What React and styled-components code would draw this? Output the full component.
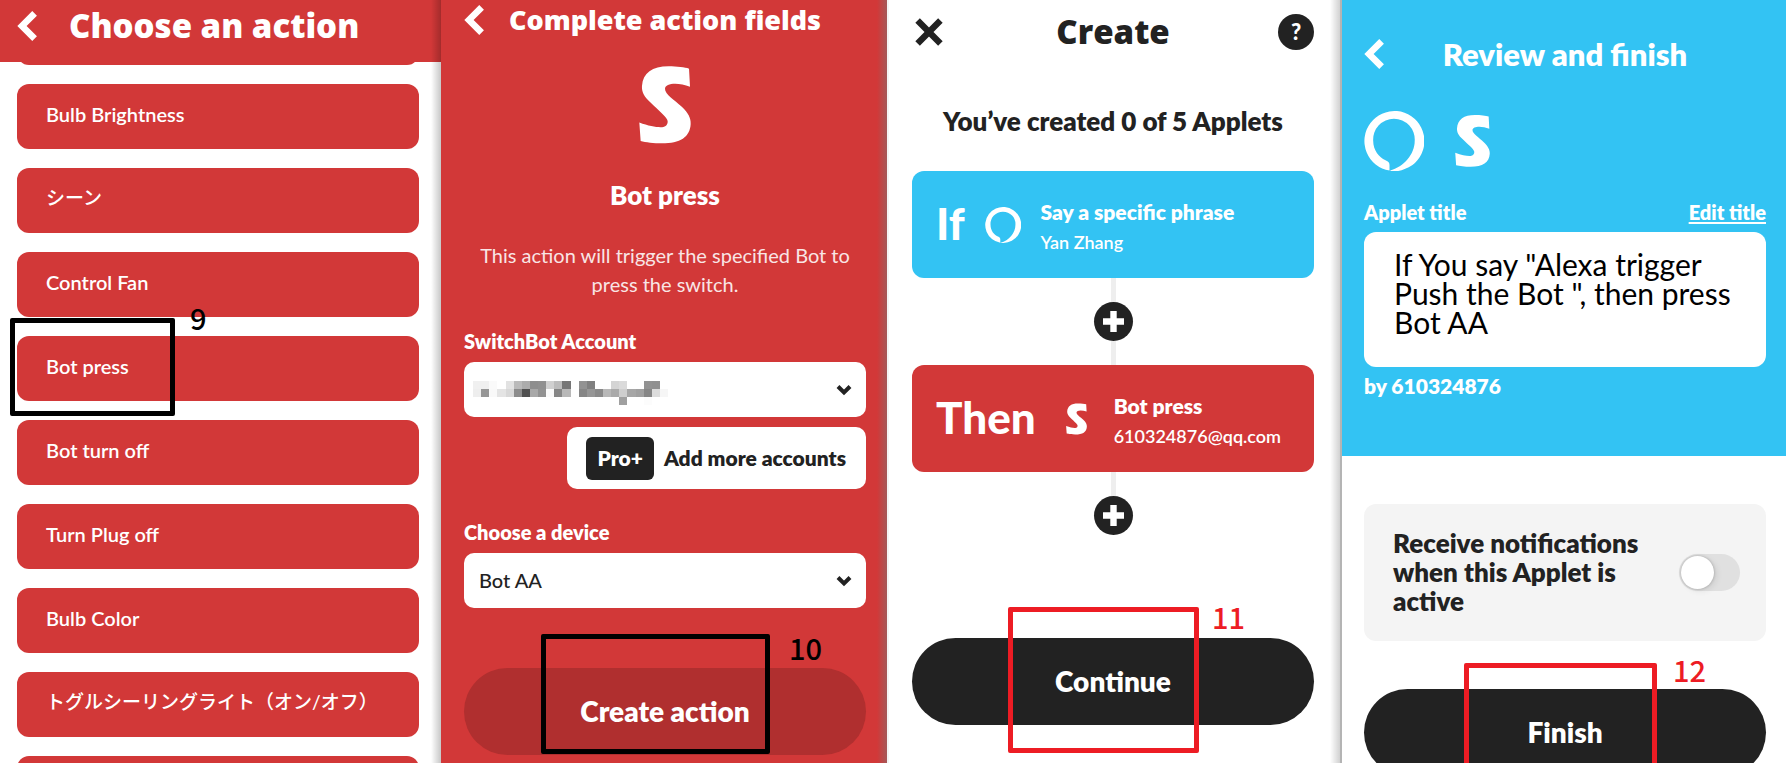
import React from "react";
import styled, { createGlobalStyle } from "styled-components";

const RED = "#d23838";
const BLUE = "#33c3f3";
const INK = "#222222";
const MARK_RED = "#ed1c24";

const GlobalStyle = createGlobalStyle`
  *, *::before, *::after { box-sizing: border-box; }
  body {
    margin: 0;
    background: #fff;
    font-family: Lato, "Noto Sans CJK JP", sans-serif;
    font-size: 20px;
    line-height: 24px;
    color: ${INK};
  }
  h1, h2, h3, p, ul { margin: 0; padding: 0; }
  button, select, textarea { font: inherit; color: inherit; border: 0; margin: 0; padding: 0; }
`;

const Board = styled.main`
  display: grid;
  grid-template-columns: 441fr 448fr 453fr 444fr;
  height: 100vh;
  overflow: hidden;
`;

const Screen = styled.section`
  position: relative;
  min-width: 0;
  overflow: hidden;
  background: ${(p) => p.$bg || "#fff"};
  color: ${(p) => p.$color || INK};
  padding: 0 ${(p) => p.$right || 0}px 0 ${(p) => p.$left || 0}px;
  border-right: ${(p) => p.$edge || "0"};

  &::after {
    content: "";
    display: ${(p) => (p.$shade ? "block" : "none")};
    position: absolute;
    z-index: 3;
    top: 0;
    right: 0;
    bottom: 0;
    width: 10px;
    background: linear-gradient(to right, transparent, ${(p) => p.$shade});
  }
`;

const IconButton = styled.button`
  display: flex;
  align-items: center;
  justify-content: center;
  flex: none;
  background: none;
  cursor: pointer;
`;

const Bar = styled.header`
  display: grid;
  grid-template-columns: 36px 1fr 36px;
  align-items: center;
  justify-items: center;
  height: ${(p) => p.$height}px;

  & > button:first-child { justify-self: start; }
`;

const StickyBar = styled.header`
  position: relative;
  z-index: 2;
  display: flex;
  align-items: center;
  gap: 32px;
  height: 62px;
  padding: 0 17px 10px;
  background: ${RED};
  color: #fff;
`;

const Title = styled.h1`
  font-family: ${(p) => (p.$weight ? "inherit" : '"Open Sans", sans-serif')};
  font-size: ${(p) => p.$size}px;
  line-height: 40px;
  font-weight: ${(p) => p.$weight || 800};
  text-align: center;
  white-space: nowrap;
`;

/* ---------- action list ---------- */

const ActionList = styled.ul`
  list-style: none;
  display: flex;
  flex-direction: column;
  gap: 19px;
  margin-top: -62px;
  padding: 0 22px 0 17px;
`;

const ActionItem = styled.li`
  position: relative;
`;

const ActionButton = styled.button`
  display: block;
  width: 100%;
  height: 65px;
  padding: 0 29px 6px;
  border-radius: 12px;
  background: ${RED};
  color: #fff;
  font-weight: 600;
  text-align: left;
  cursor: pointer;

  &:lang(ja) { font-size: 19px; font-weight: 500; }
`;

/* ---------- form parts ---------- */

const Logo = styled.div`
  display: flex;
  justify-content: center;
  margin-top: 26px;
`;

const Heading = styled.h2`
  font-size: 26px;
  line-height: 30px;
  font-weight: 800;
  text-align: center;
  white-space: nowrap;
  margin-top: ${(p) => p.$top}px;
`;

const Description = styled.p`
  margin-top: 31px;
  line-height: 29px;
  text-align: center;
  opacity: 0.87;
`;

const FieldLabel = styled.label`
  display: block;
  margin-top: ${(p) => p.$top || 0}px;
  font-weight: 800;
`;

const SelectBox = styled.div`
  position: relative;
  margin-top: 9px;
  color: ${INK};

  select {
    appearance: none;
    display: block;
    width: 100%;
    height: 55px;
    padding: 0 48px 2px 15px;
    border-radius: 10px;
    background: #fff;
    font-weight: 500;
  }
`;

const SelectArrow = styled.svg`
  position: absolute;
  right: 14px;
  top: 22px;
  pointer-events: none;
`;

const Mosaic = styled.svg`
  position: absolute;
  left: 9px;
  top: 19px;
  pointer-events: none;
`;

const AddAccounts = styled.button`
  display: flex;
  align-items: center;
  gap: 10px;
  height: 62px;
  margin: 10px 0 0 auto;
  padding: 0 20px 0 19px;
  border-radius: 10px;
  background: #fff;
  color: ${INK};
  font-size: 21px;
  font-weight: 800;
  cursor: pointer;
`;

const ProTag = styled.span`
  display: flex;
  align-items: center;
  height: 43px;
  padding: 0 11px;
  border-radius: 6px;
  background: ${INK};
  color: #fff;
`;

const Cta = styled.div`
  position: relative;
  margin-top: ${(p) => p.$top}px;
`;

const CtaButton = styled.button`
  display: block;
  width: 100%;
  height: 87px;
  padding-bottom: 2px;
  border-radius: 44px;
  background: ${(p) => p.$bg || INK};
  color: #fff;
  font-size: 28px;
  font-weight: 800;
  cursor: pointer;
`;

/* ---------- applet builder ---------- */

const HelpButton = styled(IconButton)`
  width: 36px;
  height: 36px;
  border-radius: 50%;
  background: ${INK};
  color: #fff;
  font-size: 22px;
  font-weight: 900;
`;

const StepCard = styled.article`
  display: flex;
  align-items: center;
  height: 107px;
  margin-top: ${(p) => p.$top || 0}px;
  padding: 0 24px;
  border-radius: 12px;
  background: ${(p) => p.$bg};
  color: #fff;
`;

const StepWord = styled.span`
  font-size: 44px;
  line-height: 48px;
  font-weight: 900;
  padding-bottom: 4px;
  margin-right: ${(p) => p.$gap}px;
`;

const StepText = styled.div`
  margin-left: ${(p) => p.$gap}px;
  padding-top: 4px;

  h3 {
    font-size: 21px;
    line-height: 30px;
    font-weight: 800;
    white-space: nowrap;
  }
  p {
    font-size: 18px;
    line-height: 30px;
    font-weight: 600;
  }
`;

const Connector = styled.div`
  display: flex;
  flex-direction: column;
  align-items: center;
`;

const Line = styled.span`
  width: 5px;
  height: 24px;
  background: #eeeeee;
`;

const AddStep = styled(IconButton)`
  width: 39px;
  height: 39px;
  border-radius: 50%;
  background: ${INK};
`;

/* ---------- review ---------- */

const ReviewTop = styled.div`
  padding: 22px 20px 58px 22px;
  background: ${BLUE};
  color: #fff;
`;

const ReviewBody = styled.div`
  padding: 48px 20px 0 22px;
`;

const ServiceIcons = styled.div`
  display: flex;
  align-items: center;
  gap: 31px;
  margin-top: 25px;
`;

const LabelRow = styled.div`
  display: flex;
  justify-content: space-between;
  margin-top: 29px;
  font-weight: 800;

  a { color: inherit; text-decoration-thickness: 2px; text-underline-offset: 2px; }
`;

const TitleInput = styled.textarea`
  display: block;
  width: 100%;
  height: 135px;
  margin-top: 8px;
  padding: 18px 28px 0 30px;
  border-radius: 12px;
  background: #fff;
  color: #000;
  font-size: 30px;
  line-height: 29px;
  resize: none;
  outline: 0;
  overflow: hidden;
`;

const Byline = styled.p`
  margin-top: 7px;
  font-size: 21px;
  font-weight: 800;
`;

const NotifyCard = styled.label`
  display: flex;
  align-items: center;
  justify-content: space-between;
  height: 137px;
  padding: 0 26px 0 29px;
  border-radius: 12px;
  background: #f4f4f4;
  font-size: 26px;
  line-height: 29px;
  font-weight: 800;

  span { max-width: 256px; }
`;

const Toggle = styled.input`
  appearance: none;
  position: relative;
  flex: none;
  width: 61px;
  height: 37px;
  margin: 0;
  border-radius: 19px;
  background: #e0e0e0;
  cursor: pointer;

  &::before {
    content: "";
    position: absolute;
    top: 2px;
    left: 2px;
    width: 33px;
    height: 33px;
    border-radius: 50%;
    background: #fff;
    box-shadow: 0 0 3px rgba(0, 0, 0, 0.25), 3px 2px 6px rgba(0, 0, 0, 0.08);
  }
  &:checked::before { left: 26px; }
`;

/* ---------- tutorial marks laid over the screens ---------- */

const Mark = styled.span`
  position: absolute;
  z-index: 2;
  left: ${(p) => p.$x}px;
  top: ${(p) => p.$y}px;
  width: ${(p) => p.$w}px;
  height: ${(p) => p.$h}px;
  border: 5px solid ${(p) => p.$color || "#000"};
  border-radius: 2px;
  pointer-events: none;
`;

const MarkNumber = styled.span`
  position: absolute;
  z-index: 2;
  left: ${(p) => p.$x}px;
  top: ${(p) => p.$y}px;
  color: ${(p) => p.$color || "#000"};
  font-family: "Noto Sans CJK SC", sans-serif;
  font-size: 29px;
  line-height: 30px;
  font-weight: 500;
  pointer-events: none;
`;

const BackIcon = () => (
  <svg width="20" height="30" viewBox="0 0 20 30" fill="none" stroke="currentColor" strokeWidth="6.6">
    <path d="M17.6 2.4 L5 15 L17.6 27.6" />
  </svg>
);

const CloseIcon = () => (
  <svg width="34" height="28" viewBox="-3 0 34 28" fill="none" stroke="currentColor" strokeWidth="6.4">
    <path d="M2.6 2.6 L25.4 25.4 M25.4 2.6 L2.6 25.4" />
  </svg>
);

const PlusIcon = () => (
  <svg width="21" height="21" viewBox="0 0 21 21" fill="#fff">
    <path d="M7.3 0h6.4v7.3H21v6.4h-7.3V21H7.3v-7.3H0V7.3h7.3z" />
  </svg>
);

const SwitchBotLogo = ({ height }) => (
  <svg width={Math.round((height * 52) / 78)} height={height} viewBox="0 0 158 235" fill="#fff" aria-label="SwitchBot">
    <path d="M152 7L155 62C120 48 80 50 79 68C78 85 110 103 130 123C150 142 158 158 157 175C155 215 125 234 70 234C45 234 20 231 5 227L1 171C30 182 55 186 70 185C82 184 88 176 87 166C86 155 60 135 35 110C15 92 8 78 9 60C12 20 40 0 90 0C115 0 140 3 152 7Z" />
  </svg>
);

const AlexaLogo = ({ size }) => (
  <svg width={size} height={size} viewBox="0 0 60 60" fill="#fff" aria-label="Alexa">
    <path d="M25.5 59.6A30 30 0 1 1 30 60C28 60 26.5 59.9 25.9 59.5C40 56 50.7 43 50.7 30A20.8 20.8 0 1 0 9.2 30C9.2 39 15 46.500 21.500 49.300C24.500 50.600 25.500 52 25.500 54Z" />
  </svg>
);

const Arrow = () => (
  <SelectArrow width="16" height="12" viewBox="0 0 16 12" fill="none" stroke={INK} strokeWidth="4">
    <path d="M2 2.500 L8 8.500 L14 2.500" />
  </SelectArrow>
);

/* Grey level of each tile in the obscured account name, row by row. */
const TILES = [
  [240, 240, 250, 255, 226, 186, 172, 142, 144, 208, 188, 118, 255, 146, 128, 255, 255, 212, 218, 255, 255, 146, 144, 255],
  [238, 150, 249, 228, 216, 140, 80, 168, 146, 250, 134, 184, 255, 134, 150, 138, 184, 170, 206, 166, 160, 134, 220, 246],
  [255, 255, 255, 255, 255, 255, 255, 255, 255, 255, 255, 255, 255, 255, 255, 255, 255, 255, 160, 255, 255, 252, 255, 255],
];

const AccountMosaic = () => (
  <Mosaic width="195" height="24" viewBox="0 0 24 3" preserveAspectRatio="none" shapeRendering="crispEdges">
    {TILES.map((row, y) =>
      row.map((g, x) => <rect key={`${x}-${y}`} x={x} y={y} width="1" height="1" fill={`rgb(${g},${g},${g})`} />)
    )}
  </Mosaic>
);

const ACTIONS = [
  { name: "" },
  { name: "Bulb Brightness" },
  { name: "シーン", lang: "ja" },
  { name: "Control Fan" },
  { name: "Bot press", marked: true },
  { name: "Bot turn off" },
  { name: "Turn Plug off" },
  { name: "Bulb Color" },
  { name: "トグルシーリングライト（オン/オフ）", lang: "ja" },
  { name: "" },
];

function ChooseAction() {
  return (
    <Screen $shade="rgba(0,0,0,0.22)">
      <StickyBar>
        <IconButton aria-label="Back"><BackIcon /></IconButton>
        <Title $size={33}>Choose an action</Title>
      </StickyBar>
      <ActionList>
        {ACTIONS.map(({ name, lang, marked }, i) => (
          <ActionItem key={i}>
            <ActionButton lang={lang}>{name}</ActionButton>
            {marked && (
              <>
                <Mark $x={-7} $y={-18} $w={165} $h={98} />
                <MarkNumber $x={173} $y={-34}>9</MarkNumber>
              </>
            )}
          </ActionItem>
        ))}
      </ActionList>
    </Screen>
  );
}

function CompleteFields() {
  return (
    <Screen $bg={RED} $color="#fff" $left={23} $right={21} $edge="2px solid #f4f4f4" $shade="rgba(120,120,120,0.5)">
      <Bar $height={40}>
        <IconButton aria-label="Back"><BackIcon /></IconButton>
        <Title $size={27}>Complete action fields</Title>
      </Bar>
      <Logo><SwitchBotLogo height={78} /></Logo>
      <Heading $top={36}>Bot press</Heading>
      <Description>This action will trigger the specified Bot to press the switch.</Description>
      <FieldLabel htmlFor="account" $top={30}>SwitchBot Account</FieldLabel>
      <SelectBox>
        <select id="account"><option value="" aria-label="Hidden account" /></select>
        <AccountMosaic />
        <Arrow />
      </SelectBox>
      <AddAccounts><ProTag>Pro+</ProTag>Add more accounts</AddAccounts>
      <FieldLabel htmlFor="device" $top={31}>Choose a device</FieldLabel>
      <SelectBox>
        <select id="device"><option>Bot AA</option></select>
        <Arrow />
      </SelectBox>
      <Cta $top={60}>
        <CtaButton $bg="#b02f2f">Create action</CtaButton>
        <Mark $x={77} $y={-34} $w={229} $h={120} />
        <MarkNumber $x={325} $y={-36}>10</MarkNumber>
      </Cta>
    </Screen>
  );
}

function CreateApplet() {
  return (
    <Screen $left={23} $right={26} $edge="2px solid #b4b4b4" $shade="rgba(0,0,0,0.18)">
      <Bar $height={64}>
        <IconButton aria-label="Close"><CloseIcon /></IconButton>
        <Title $size={33}>Create</Title>
        <HelpButton aria-label="Help">?</HelpButton>
      </Bar>
      <Heading $top={42}>You’ve created 0 of 5 Applets</Heading>
      <StepCard $bg={BLUE} $top={35}>
        <StepWord $gap={20}>If</StepWord>
        <AlexaLogo size={36} />
        <StepText $gap={20}>
          <h3>Say a specific phrase</h3>
          <p>Yan Zhang</p>
        </StepText>
      </StepCard>
      <Connector>
        <Line />
        <AddStep aria-label="Add a step"><PlusIcon /></AddStep>
        <Line />
      </Connector>
      <StepCard $bg={RED}>
        <StepWord $gap={30}>Then</StepWord>
        <SwitchBotLogo height={32} />
        <StepText $gap={27}>
          <h3>Bot press</h3>
          <p>610324876@qq.com</p>
        </StepText>
      </StepCard>
      <Connector>
        <Line />
        <AddStep aria-label="Add a step"><PlusIcon /></AddStep>
      </Connector>
      <Cta $top={103}>
        <CtaButton>Continue</CtaButton>
        <Mark $x={96} $y={-31} $w={191} $h={146} $color={MARK_RED} />
        <MarkNumber $x={300} $y={-37} $color={MARK_RED}>11</MarkNumber>
      </Cta>
    </Screen>
  );
}

function ReviewApplet() {
  return (
    <Screen>
      <ReviewTop>
        <Bar $height={64}>
          <IconButton aria-label="Back"><BackIcon /></IconButton>
          <Title $size={31} $weight={800}>Review and finish</Title>
        </Bar>
        <ServiceIcons>
          <AlexaLogo size={60} />
          <SwitchBotLogo height={52} />
        </ServiceIcons>
        <LabelRow>
          <label htmlFor="applet-title">Applet title</label>
          <a href="#edit">Edit title</a>
        </LabelRow>
        <TitleInput
          id="applet-title"
          spellCheck={false}
          defaultValue={'If You say "Alexa trigger Push the Bot ", then press Bot AA'}
        />
        <Byline>by 610324876</Byline>
      </ReviewTop>
      <ReviewBody>
        <NotifyCard>
          <span>Receive notifications when this Applet is active</span>
          <Toggle type="checkbox" role="switch" />
        </NotifyCard>
        <Cta $top={48}>
          <CtaButton>Finish</CtaButton>
          <Mark $x={100} $y={-26} $w={193} $h={146} $color={MARK_RED} />
          <MarkNumber $x={309} $y={-35} $color={MARK_RED}>12</MarkNumber>
        </Cta>
      </ReviewBody>
    </Screen>
  );
}

export default function App() {
  return (
    <>
      <GlobalStyle />
      <Board>
        <ChooseAction />
        <CompleteFields />
        <CreateApplet />
        <ReviewApplet />
      </Board>
    </>
  );
}
